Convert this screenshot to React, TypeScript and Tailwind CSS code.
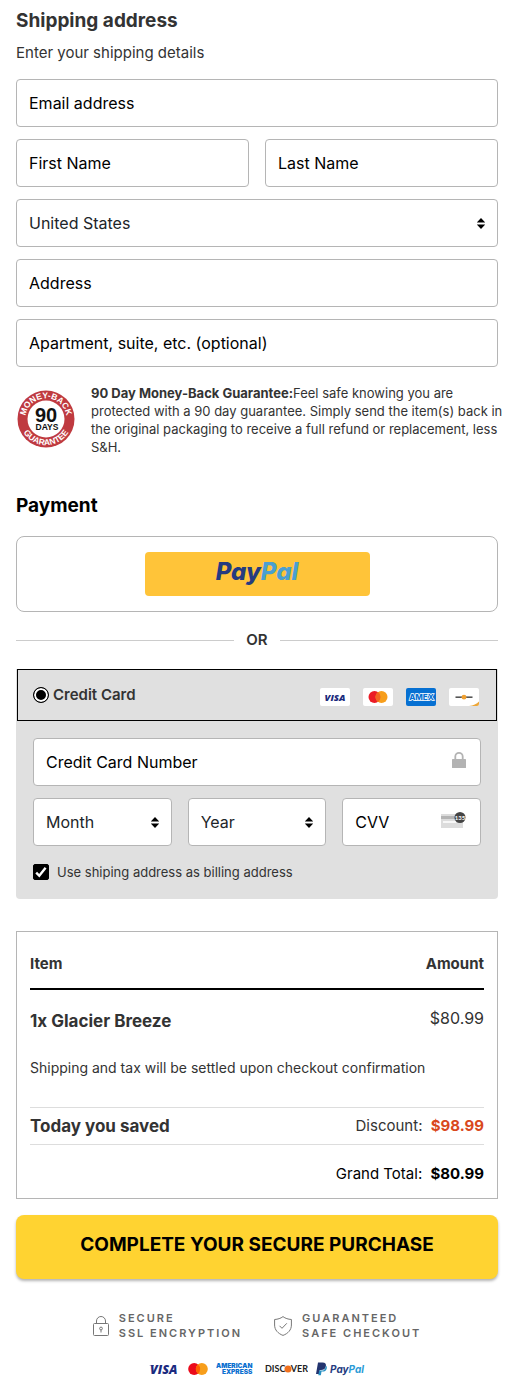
import { useState } from "react";
import type { ReactNode } from "react";

type FieldProps = {
  id: string;
  label: string;
  type?: string;
  icon?: ReactNode;
};

// The label sits inside the box until something is typed
function Field({ id, label, type = "text", icon }: FieldProps) {
  return (
    <div className="relative min-w-0 flex-1">
      <input
        id={id}
        name={id}
        type={type}
        placeholder=" "
        className="peer h-12 w-full rounded border border-[#b5b5b5] bg-white px-3 text-base text-black outline-none focus:border-black"
      />
      <label
        htmlFor={id}
        className="pointer-events-none absolute inset-y-0 left-[13px] hidden items-center text-base text-black peer-placeholder-shown:flex"
      >
        {label}
      </label>
      {icon && (
        <span className="pointer-events-none absolute inset-y-0 right-[15px] flex items-center pb-1">
          {icon}
        </span>
      )}
    </div>
  );
}

type SelectFieldProps = {
  id: string;
  label: string;
  options: string[];
};

function SelectField({ id, label, options }: SelectFieldProps) {
  return (
    <div className="relative min-w-0 flex-1">
      <select
        id={id}
        name={id}
        aria-label={label}
        className="h-12 w-full appearance-none rounded border border-[#b5b5b5] bg-white px-3 text-base text-[#212529] outline-none focus:border-black"
      >
        {options.map((option) => (
          <option key={option}>{option}</option>
        ))}
      </select>
      <span className="pointer-events-none absolute inset-y-0 right-[13px] flex items-center">
        <svg viewBox="0 0 8 11" className="h-[11px] w-2" fill="#000" aria-hidden="true">
          <path d="M4 0 8 4.300V4.600H0V4.300zM4 11 0 6.700V6.400h8v.3z" />
        </svg>
      </span>
    </div>
  );
}

function GuaranteeSeal() {
  return (
    <svg viewBox="0 0 60 60" className="size-[60px] shrink-0" role="img" aria-label="90 days seal">
      <defs>
        <path id="sealTop" d="M9.740 34.300A20.700 20.700 0 1 1 50.260 34.300" />
        <path id="sealBottom" d="M3.800 30a26.200 26.200 0 0 0 52.400 0" />
      </defs>
      <circle cx="30" cy="30" r="28.500" fill="#bf3a40" />
      <circle cx="30" cy="30" r="18.500" fill="#fff" />
      <g fill="#fff" fontWeight="700" fontSize="8.500" textAnchor="middle" fontFamily="Liberation Sans, sans-serif">
        <text>
          <textPath href="#sealTop" startOffset="50%">MONEY-BACK</textPath>
        </text>
        <text>
          <textPath href="#sealBottom" startOffset="50%">GUARANTEE</textPath>
        </text>
      </g>
      <g fill="#111" textAnchor="middle" fontFamily="Liberation Sans, sans-serif" fontWeight="700">
        <text x="30" y="33" fontSize="20">90</text>
        <text x="31" y="41" fontSize="8.500">DAYS</text>
      </g>
    </svg>
  );
}

function LockIcon() {
  return (
    <svg viewBox="0 0 14 16" className="h-4 w-[14px]" aria-hidden="true">
      <path d="M3.300 8V4.600a3.700 3.700 0 0 1 7.400 0V8" fill="none" stroke="#b3b3b3" strokeWidth="1.800" />
      <rect y="7" width="14" height="9" rx="0.600" fill="#b3b3b3" />
    </svg>
  );
}

function CvvIcon() {
  return (
    <svg viewBox="0 0 25 17" className="h-[17px] w-[25px]" aria-hidden="true">
      <rect y="2" width="22" height="14" fill="#dcdcdc" />
      <rect y="4" width="22" height="3" fill="#b4b4b4" />
      <rect x="2" y="9" width="13" height="2" fill="#f7f7f7" />
      <circle cx="19" cy="5.500" r="5.500" fill="#444" />
      <text x="19" y="8" fontSize="6" fontWeight="700" fill="#fff" textAnchor="middle" fontFamily="Lato, sans-serif">
        135
      </text>
    </svg>
  );
}

function HeaderCards() {
  return (
    <div className="flex items-center gap-[13px] pt-1">
      <svg viewBox="0 0 30 18" className="h-[18px] w-[30px]" role="img" aria-label="Visa">
        <rect width="30" height="18" rx="2" fill="#fff" />
        <text x="15" y="12.700" fontSize="9.500" fontWeight="800" fontStyle="italic" fill="#1a2a7c" textAnchor="middle" fontFamily="Open Sans, sans-serif">
          VISA
        </text>
      </svg>
      <svg viewBox="0 0 30 18" className="h-[18px] w-[30px]" role="img" aria-label="Mastercard">
        <rect width="30" height="18" rx="2" fill="#fff" />
        <circle cx="11.500" cy="9" r="6" fill="#eb1c26" />
        <circle cx="18.500" cy="9" r="6" fill="#f79e1b" />
        <path d="M15 4.100a6 6 0 0 1 0 9.800 6 6 0 0 1 0-9.800z" fill="#f26522" />
      </svg>
      <svg viewBox="0 0 30 18" className="h-[18px] w-[30px]" role="img" aria-label="Amex">
        <rect width="30" height="18" rx="2" fill="#0670d2" />
        <text x="15.500" y="12" fontSize="8" fontWeight="800" fill="#0670d2" stroke="#fff" strokeWidth="1.400" paintOrder="stroke" textAnchor="middle" fontFamily="Inter, sans-serif">
          AMEX
        </text>
      </svg>
      <svg viewBox="0 0 30 18" className="h-[18px] w-[30px]" role="img" aria-label="Discover">
        <rect width="30" height="18" rx="2" fill="#fff" />
        <path d="M6.500 9.200h17" stroke="#555" strokeWidth="1.600" />
        <circle cx="15" cy="9.200" r="2.400" fill="#f0a030" />
        <path d="M20 18c4.500-.6 7.500-2 10-4.500V16a2 2 0 0 1-2 2z" fill="#eda637" />
      </svg>
    </div>
  );
}

function FooterLogos() {
  return (
    <div className="flex items-center justify-center gap-2">
      <svg viewBox="0 0 31 20" className="h-5 w-[31px]" role="img" aria-label="Visa">
        <text x="1" y="15" fontSize="12.500" fontWeight="800" fontStyle="italic" fill="#1b2a80" fontFamily="Open Sans, sans-serif">
          VISA
        </text>
        <path d="M0 6h4l1.500 1.200z" fill="#1b2a80" />
      </svg>
      <svg viewBox="0 0 20 12" className="h-3 w-5" role="img" aria-label="Mastercard">
        <circle cx="6.200" cy="6" r="6" fill="#eb0a1b" />
        <circle cx="13.800" cy="6" r="6" fill="#f79e1b" />
        <path d="M10 1.400a6 6 0 0 1 0 9.200 6 6 0 0 1 0-9.200z" fill="#ff5f00" />
      </svg>
      <svg viewBox="0 0 41 20" className="h-5 w-[41px]" role="img" aria-label="American Express">
        <g fill="#0a6fd0" fontSize="6.500" fontWeight="900" fontFamily="Inter, sans-serif">
          <text x="0" y="9">AMERICAN</text>
          <text x="6" y="15">EXPRESS</text>
        </g>
      </svg>
      <svg viewBox="0 0 43 14" className="h-[14px] w-[43px]" role="img" aria-label="Discover">
        <g fill="#222" fontSize="9" fontWeight="700" fontFamily="Lato, sans-serif">
          <text x="0" y="10.200">DISC</text>
          <text x="43" y="10.200" textAnchor="end">VER</text>
        </g>
        <circle cx="23" cy="7" r="3.500" fill="#f0701d" />
      </svg>
      <svg viewBox="0 0 50 14" className="h-[14px] w-[50px]" role="img" aria-label="PayPal">
        <path d="M2 .5h4.600c2.600 0 3.800 1.500 3.300 3.700C9.300 7 7.500 8 5 8H3.800L3 12H0z" fill="#23346f" />
        <path d="M9.900 3.400c1 .8 1.200 2 .8 3.300-.6 2.100-2 2.900-4.200 2.900h-1l-.6 3.700H2.300L3.200 8.600H5.500c2.500 0 4-1.300 4.400-5.200z" fill="#2790c3" />
        <text x="14" y="10.500" fontSize="10" fontWeight="700" fontStyle="italic" fontFamily="Inter, sans-serif">
          <tspan fill="#253b80">Pay</tspan>
          <tspan fill="#2a9bd7">Pal</tspan>
        </text>
      </svg>
    </div>
  );
}

export default function App() {
  const [sameAddress, setSameAddress] = useState(true);

  return (
    <main className="bg-white pt-[9px] pr-[18px] pb-4 pl-4 font-[Inter,sans-serif] text-[#333]">
      <form onSubmit={(e) => e.preventDefault()}>
        <section>
          <h2 className="text-[19px] leading-6 font-bold">Shipping address</h2>
          <p className="mt-2 text-[15px] leading-6">Enter your shipping details</p>

          <div className="mt-[14px] flex flex-col gap-3">
            <Field id="email" label="Email address" type="email" />
            <div className="flex gap-4">
              <Field id="firstName" label="First Name" />
              <Field id="lastName" label="Last Name" />
            </div>
            <SelectField id="country" label="Country" options={["United States", "Canada"]} />
            <Field id="address" label="Address" />
            <Field id="apartment" label="Apartment, suite, etc. (optional)" />
          </div>

          <div className="mt-[17px] flex items-start gap-[15px]">
            <div className="pt-[5px]">
              <GuaranteeSeal />
            </div>
            <p className="-mr-2 text-[13px] leading-[18px]">
              <b>90 Day Money-Back Guarantee:</b>Feel safe knowing you are protected with a 90 day
              guarantee. Simply send the item(s) back in the original packaging to receive a full
              refund or replacement, less S&amp;H.
            </p>
          </div>
        </section>

        <section className="mt-[38px]">
          <h2 className="text-[19px] leading-6 font-bold text-black">Payment</h2>

          <div className="mt-[18px] flex justify-center rounded-lg border border-[#b5b5b5] p-[15px]">
            <button
              type="button"
              className="h-11 w-[225px] rounded bg-[#ffc439] pb-1 text-2xl leading-none font-extrabold text-[#253b80] italic"
            >
              Pay<span className="text-[#4a9fd2]">Pal</span>
            </button>
          </div>

          <div className="mt-4 flex items-center gap-3 text-[15px] leading-6 font-semibold">
            <span className="h-px flex-1 bg-[#ccc]" />
            OR
            <span className="h-px flex-1 bg-[#ccc]" />
          </div>

          <div className="mt-[17px] rounded-b bg-[#e0e0e0] pb-[17px]">
            <div className="mx-px flex h-[52px] items-center justify-between border border-black pr-[17px] pl-[15px]">
              <label className="flex items-center gap-1 text-[15px] font-semibold">
                <input
                  type="radio"
                  name="method"
                  defaultChecked
                  className="size-4 appearance-none rounded-full border border-black bg-white checked:bg-black checked:shadow-[inset_0_0_0_2px_white]"
                />
                Credit Card
              </label>
              <HeaderCards />
            </div>

            <div className="flex flex-col gap-3 px-[17px] pt-[17px]">
              <Field id="cardNumber" label="Credit Card Number" icon={<LockIcon />} />
              <div className="flex gap-4">
                <SelectField id="month" label="Expiry month" options={["Month", "01", "02", "03"]} />
                <SelectField id="year" label="Expiry year" options={["Year", "2025", "2026", "2027"]} />
                <Field id="cvv" label="CVV" icon={<CvvIcon />} />
              </div>
            </div>

            <label className="mt-4 flex items-center gap-2 px-[17px] text-[13px] leading-5">
              <span className="relative flex">
                <input
                  type="checkbox"
                  checked={sameAddress}
                  onChange={(e) => setSameAddress(e.target.checked)}
                  className="size-4 appearance-none rounded-xs border border-black bg-white checked:bg-black"
                />
                {sameAddress && (
                  <svg viewBox="0 0 16 16" className="pointer-events-none absolute inset-0 size-4" aria-hidden="true">
                    <path d="m3.200 8.600 3.100 3.200 6.300-8" fill="none" stroke="#fff" strokeWidth="2.400" />
                  </svg>
                )}
              </span>
              Use shiping address as billing address
            </label>
          </div>
        </section>

        <section className="mt-8 border border-[#b5b5b5] px-[13px]">
          <table className="w-full border-separate border-spacing-0">
            <thead>
              <tr className="text-[15px] leading-6 font-bold">
                <th className="border-b-2 border-black pt-5 pb-3 text-left">Item</th>
                <th className="border-b-2 border-black pt-5 pb-3 text-right">Amount</th>
              </tr>
            </thead>
            <tbody>
              <tr className="align-top">
                <td className="pt-4 text-[17px] leading-[30px] font-bold">1x Glacier Breeze</td>
                <td className="pt-4 text-right text-base leading-6">$80.99</td>
              </tr>
              <tr>
                <td colSpan={2} className="border-b border-[#ddd] pt-[22px] pb-[29px] text-sm leading-5">
                  Shipping and tax will be settled upon checkout confirmation
                </td>
              </tr>
              <tr>
                <td className="border-b border-[#ddd] text-[17px] leading-9 font-bold">Today you saved</td>
                <td className="border-b border-[#ddd] text-right text-[15px] leading-9">
                  Discount: <b className="ml-1 text-[#d9481c]">$98.99</b>
                </td>
              </tr>
              <tr className="text-black">
                <td colSpan={2} className="pt-[17px] pb-3 text-right text-[15px] leading-6">
                  Grand Total: <b className="ml-1">$80.99</b>
                </td>
              </tr>
            </tbody>
          </table>
        </section>

        <button
          type="submit"
          className="mt-4 h-16 w-full rounded-lg bg-[#ffd331] pb-1 text-[19px] font-bold text-black shadow-[0_2px_3px_rgba(0,0,0,0.3)]"
        >
          COMPLETE YOUR SECURE PURCHASE
        </button>
      </form>

      <footer className="mt-8">
        <div className="flex justify-center gap-8 text-[11px] leading-[15px] font-semibold tracking-[2px] text-[#666]">
          <div className="flex items-center gap-[10px]">
            <svg viewBox="0 0 16 20" className="h-5 w-4" fill="none" stroke="#777" aria-hidden="true">
              <rect x="0.500" y="7.500" width="15" height="12" rx="1" />
              <path d="M3.500 7.500V5a4.500 4.500 0 0 1 9 0v2.500" />
              <circle cx="8" cy="12.500" r="1.400" />
              <path d="M8 14v2.500" />
            </svg>
            <p>
              SECURE
              <br />
              SSL ENCRYPTION
            </p>
          </div>
          <div className="flex items-center gap-[10px]">
            <svg viewBox="0 0 18 20" className="h-5 w-[18px]" fill="none" stroke="#777" aria-hidden="true">
              <path d="M9 .6C6.500 2.500 4 3.200.600 3.500v5.500c0 5 3.400 8.500 8.400 10.400 5-1.900 8.400-5.400 8.400-10.400V3.500C14 3.200 11.500 2.500 9 .6z" />
              <path d="m5.500 9.800 2.500 2.500 4.800-5" />
            </svg>
            <p>
              GUARANTEED
              <br />
              SAFE CHECKOUT
            </p>
          </div>
        </div>
        <div className="mt-[18px]">
          <FooterLogos />
        </div>
      </footer>
    </main>
  );
}
